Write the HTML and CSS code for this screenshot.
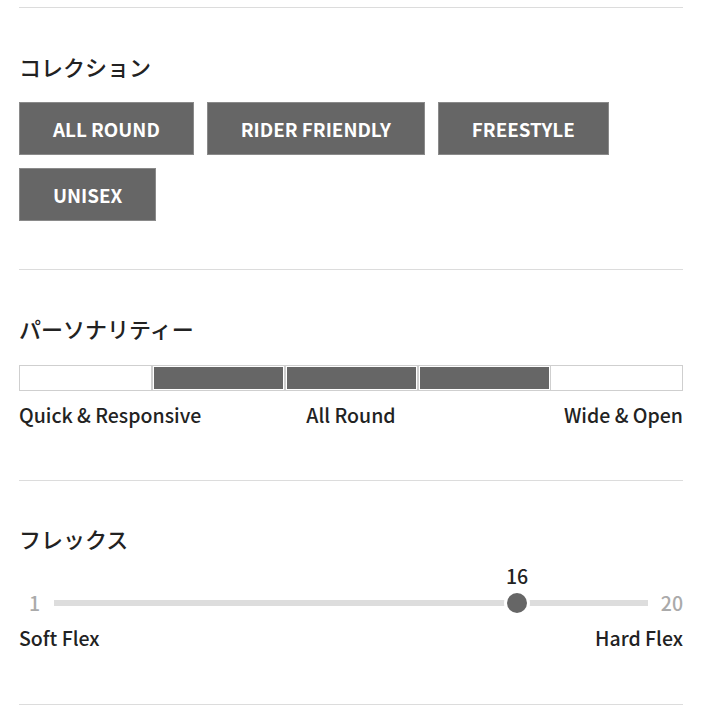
FILE: index.html
```html
<!DOCTYPE html>
<html lang="ja">
<head>
  <meta charset="UTF-8">
  <meta name="viewport" content="width=device-width, initial-scale=1.0">
  <title>ボードスペック</title>
  <link rel="stylesheet" href="styles.css">
</head>
<body>
  <div class="spec">
    <!-- Collection -->
    <section class="spec-block">
      <h2>コレクション</h2>
      <ul class="tags">
        <li>ALL ROUND</li>
        <li>RIDER FRIENDLY</li>
        <li>FREESTYLE</li>
        <li>UNISEX</li>
      </ul>
    </section>

    <!-- Personality -->
    <section class="spec-block personality">
      <h2>パーソナリティー</h2>
      <div class="scale-bar">
        <span class="cell"></span>
        <span class="cell on"></span>
        <span class="cell on"></span>
        <span class="cell on"></span>
        <span class="cell"></span>
      </div>
      <div class="scale-labels">
        <span>Quick &amp; Responsive</span>
        <span>All Round</span>
        <span>Wide &amp; Open</span>
      </div>
    </section>

    <!-- Flex -->
    <section class="spec-block">
      <h2>フレックス</h2>
      <div class="flex-scale">
        <span class="flex-end">1</span>
        <div class="track">
          <span class="thumb-value" style="left: calc((100% - 20px) * 0.7895 + 10px);">16</span>
          <span class="thumb" style="left: calc((100% - 20px) * 0.7895 + 10px);"></span>
        </div>
        <span class="flex-end">20</span>
      </div>
      <div class="flex-labels">
        <span>Soft Flex</span>
        <span>Hard Flex</span>
      </div>
    </section>
  </div>
</body>
</html>
```

FILE: styles.css
```css
* {
  box-sizing: border-box;
  margin: 0;
  padding: 0;
}

body {
  font-family: "Noto Sans CJK JP", "Noto Sans", sans-serif;
  color: #222;
  background-color: #fff;
}

.spec {
  padding: 7px 27px 0 19px;
}

/* Section blocks */
.spec-block {
  border-top: 1px solid #dcdcdc;
  padding: 42px 0 48px;
}

.spec-block.personality {
  padding-bottom: 52px;
}

.spec-block:last-child {
  border-bottom: 1px solid #dcdcdc;
  padding-top: 41px;
  padding-bottom: 53px;
}

.spec-block h2 {
  font-size: 22px;
  font-weight: 500;
  line-height: 33px;
  margin-bottom: 19px;
}

/* Collection tags */
.tags {
  list-style: none;
  display: flex;
  flex-wrap: wrap;
  gap: 13px;
}

.tags li {
  height: 53px;
  display: flex;
  align-items: center;
  padding: 0 33px;
  background-color: #666;
  border: 1px solid #8a8a8a;
  color: #fff;
  font-size: 18.8px;
  font-weight: bold;
}

/* Personality bar */
.scale-bar {
  display: flex;
  height: 26px;
  margin-top: 20px;
}

.scale-bar .cell {
  flex: 1;
  border: 1px solid #cfcfcf;
  background-color: #fff;
}

.scale-bar .cell + .cell {
  border-left: none;
}

.scale-bar .cell.on {
  background-color: #666;
  box-shadow: inset 0 0 0 1px #fff;
  border-left: 1px solid #cfcfcf;
}

.scale-labels {
  display: grid;
  grid-template-columns: repeat(3, 1fr);
  margin-top: 10px;
  font-size: 19.5px;
  font-weight: 500;
  line-height: 27px;
}

.scale-labels span:nth-child(2) {
  text-align: center;
}

.scale-labels span:nth-child(3) {
  text-align: right;
}

/* Flex slider */
.flex-scale {
  display: flex;
  align-items: center;
  margin-top: 34px;
  padding-left: 10px;
  font-size: 19.5px;
  line-height: 27px;
}

.flex-end {
  color: #aaa;
  font-weight: 500;
}

.track {
  position: relative;
  flex: 1;
  height: 6px;
  margin: 0 13px 0 14px;
  background-color: #ddd;
}

.thumb {
  position: absolute;
  top: 50%;
  width: 20px;
  height: 20px;
  border-radius: 50%;
  background-color: #666;
  box-shadow: 0 0 0 3px #fff;
  transform: translate(-50%, -50%);
}

.thumb-value {
  position: absolute;
  top: -38px;
  transform: translateX(-50%);
  font-weight: 500;
  color: #222;
}

.flex-labels {
  display: flex;
  justify-content: space-between;
  margin-top: 8px;
  font-size: 19.5px;
  font-weight: 500;
  line-height: 27px;
}
```
